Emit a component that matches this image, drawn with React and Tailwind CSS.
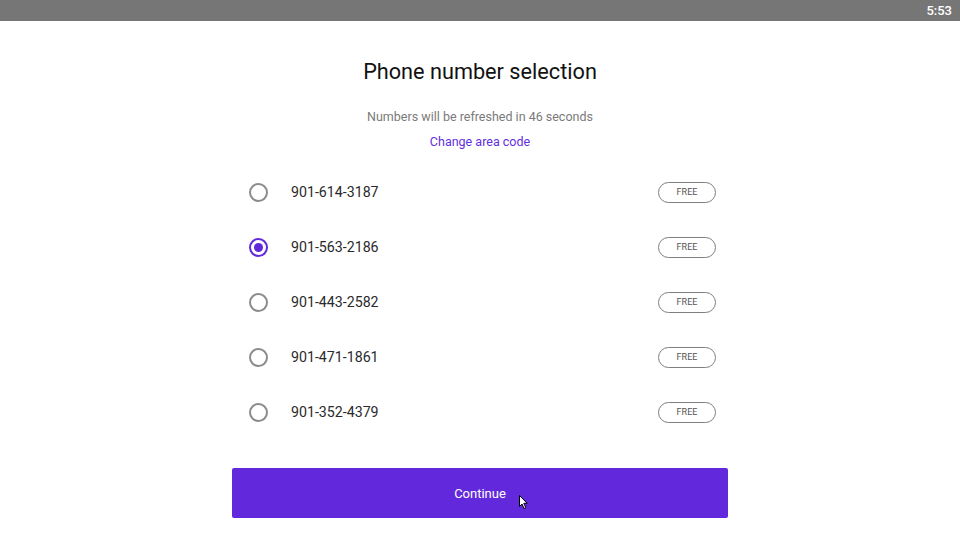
import React from "react";

const numbers = ["901-614-3187", "901-563-2186", "901-443-2582", "901-471-1861", "901-352-4379"];

export default function App() {
  return (
    <div className="relative w-[960px] h-[540px] bg-white overflow-hidden" style={{ fontFamily: "Roboto, 'Noto Sans', sans-serif" }}>
      <div className="h-[21px] bg-[#767676] flex items-center justify-end pr-[8px]">
        <span className="text-white text-[13px] leading-none font-medium">5:53</span>
      </div>
      <div className="flex flex-col items-center">
        <h1 className="mt-[37px] h-[28px] leading-[28px] text-[21.7px] text-[#111]">Phone number selection</h1>
        <p className="mt-[22px] h-[18px] leading-[18px] text-[12.5px] text-[#7a7a7a]">Numbers will be refreshed in 46 seconds</p>
        <p className="mt-[7px] h-[18px] leading-[18px] text-[12.5px] text-[#5f2ee0]">Change area code</p>
        <div className="mt-[14px] w-[496px] flex flex-col">
          {numbers.map((n, i) => (
            <div key={n} className="h-[55px] flex items-center pl-[17px] pr-[12px]">
              {i === 1 ? (
                <div className="w-[19px] h-[19px] rounded-full border-2 border-[#6229dc] flex items-center justify-center">
                  <div className="w-[9px] h-[9px] rounded-full bg-[#6229dc]" />
                </div>
              ) : (
                <div className="w-[19px] h-[19px] rounded-full border-2 border-[#8c8c8c]" />
              )}
              <span className="ml-[23px] text-[14.2px] text-[#2a2a2a]">{n}</span>
              <div className="ml-auto w-[58px] h-[21px] rounded-full border-[1.5px] border-[#7e7e7e] flex items-center justify-center">
                <span className="text-[9px] text-[#555]">FREE</span>
              </div>
            </div>
          ))}
        </div>
        <button className="mt-[28px] w-[496px] h-[50px] rounded-[2px] bg-[#6229dc] text-white text-[13px] flex items-center justify-center pt-[2px]">
          Continue
        </button>
      </div>
      <svg className="absolute left-[519px] top-[495px]" width="10" height="15" viewBox="0 0 10 15">
        <path d="M0.5 0.5 L0.5 11.5 L3 9 L5 13.5 L6.8 12.7 L4.8 8.3 L8.2 8.3 Z" fill="#fff" stroke="#000" strokeWidth="1" />
      </svg>
    </div>
  );
}
